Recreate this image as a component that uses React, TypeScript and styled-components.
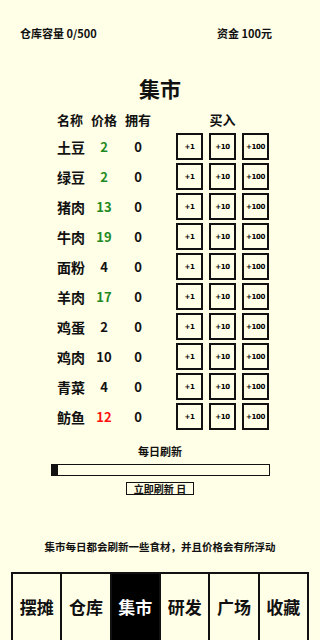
import styled, { createGlobalStyle } from "styled-components";

const GlobalStyle = createGlobalStyle`
    html, body {
        margin: 0;
        padding: 0;
        background: #fffee6;
    }
    body {
        font-family: "Noto Sans CJK SC", "Noto Sans", sans-serif;
        color: #111;
    }
`;

const Page = styled.div`
    width: 320px;
    height: 640px;
    overflow: hidden;
    display: flex;
    flex-direction: column;
    background: #fffee6;
`;

const TopBar = styled.div`
    display: flex;
    justify-content: space-between;
    padding: 26px 48px 0 20px;
    font-size: 11px;
    font-weight: 700;
    line-height: 14px;
`;

const Title = styled.h1`
    margin: 36px 0 0;
    text-align: center;
    font-size: 21px;
    line-height: 24px;
    font-weight: 700;
`;

const Table = styled.div`
    margin: 9px 0 0 57px;
    display: flex;
    flex-direction: column;
    gap: 3px;
`;

const Row = styled.div<{ $head?: boolean }>`
    display: flex;
    align-items: center;
    height: ${(p) => (p.$head ? "20px" : "27px")};
    margin-bottom: ${(p) => (p.$head ? "1px" : "0")};
    font-weight: 700;
    font-size: ${(p) => (p.$head ? "13px" : "14px")};
`;

const Name = styled.div`
    width: 30px;
    white-space: nowrap;
`;

const Cell = styled.div<{ $color?: string }>`
    width: 34px;
    text-align: center;
    color: ${(p) => p.$color || "#111"};
    font-size: 13px;
    white-space: nowrap;
`;

const BuyHead = styled.div`
    margin-left: 21px;
    width: 93px;
    text-align: center;
    font-size: 13px;
`;

const Buttons = styled.div`
    margin-left: 21px;
    display: flex;
    gap: 6px;
`;

const BuyButton = styled.button`
    width: 27px;
    height: 27px;
    padding: 0;
    border: 2px solid #111;
    background: #fffee6;
    font-family: "DejaVu Sans", sans-serif;
    font-size: 7px;
    font-weight: 700;
    color: #000;
    letter-spacing: -0.4px;
    -webkit-font-smoothing: antialiased;
`;

const Refresh = styled.div`
    margin-top: 14px;
    display: flex;
    flex-direction: column;
    align-items: center;
`;

const RefreshLabel = styled.div`
    font-size: 11px;
    font-weight: 700;
    line-height: 14px;
`;

const Bar = styled.div`
    margin-top: 6px;
    width: 219px;
    height: 12px;
    box-sizing: border-box;
    border: 1.5px solid #111;
    background: #fffee6;
`;

const Fill = styled.div`
    height: 100%;
    background: #111;
`;

const RefreshButton = styled.button`
    margin-top: 6px;
    width: 68px;
    height: 13px;
    padding: 0;
    box-sizing: border-box;
    border: 1.5px solid #111;
    background: #fffee6;
    font-family: inherit;
    font-size: 10px;
    font-weight: 700;
    line-height: 9px;
    color: #111;
`;

const Tip = styled.p`
    margin: 45px 0 0;
    text-align: center;
    font-size: 10.5px;
    font-weight: 700;
    line-height: 14px;
`;

const Nav = styled.nav`
    margin: 18px 11px 0;
    display: flex;
    height: 68px;
    flex-shrink: 0;
    border: 2px solid #111;
`;

const Tab = styled.div<{ $active?: boolean }>`
    flex: 1;
    display: flex;
    align-items: center;
    justify-content: center;
    padding-bottom: 4px;
    font-size: 17px;
    font-weight: 700;
    background: ${(p) => (p.$active ? "#000" : "#fffee6")};
    color: ${(p) => (p.$active ? "#fff" : "#111")};
    & + & {
        border-left: 2px solid #111;
    }
`;

type Item = { name: string; price: number; own: number; color: string };

const GREEN = "#1f8a1f";
const RED = "#ff1010";
const BLACK = "#111";

const items: Item[] = [
    { name: "土豆", price: 2, own: 0, color: GREEN },
    { name: "绿豆", price: 2, own: 0, color: GREEN },
    { name: "猪肉", price: 13, own: 0, color: GREEN },
    { name: "牛肉", price: 19, own: 0, color: GREEN },
    { name: "面粉", price: 4, own: 0, color: BLACK },
    { name: "羊肉", price: 17, own: 0, color: GREEN },
    { name: "鸡蛋", price: 2, own: 0, color: BLACK },
    { name: "鸡肉", price: 10, own: 0, color: BLACK },
    { name: "青菜", price: 4, own: 0, color: BLACK },
    { name: "鲂鱼", price: 12, own: 0, color: RED },
];

const tabs = ["摆摊", "仓库", "集市", "研发", "广场", "收藏"];

const App = () => {
    const progress = 3;

    return (
        <Page>
            <GlobalStyle />
            <TopBar>
                <span>仓库容量 0/500</span>
                <span>资金 100元</span>
            </TopBar>
            <Title>集市</Title>
            <Table>
                <Row $head>
                    <Name>名称</Name>
                    <Cell>价格</Cell>
                    <Cell>拥有</Cell>
                    <BuyHead>买入</BuyHead>
                </Row>
                {items.map((item) => (
                    <Row key={item.name}>
                        <Name>{item.name}</Name>
                        <Cell $color={item.color}>{item.price}</Cell>
                        <Cell>{item.own}</Cell>
                        <Buttons>
                            <BuyButton>+1</BuyButton>
                            <BuyButton>+10</BuyButton>
                            <BuyButton>+100</BuyButton>
                        </Buttons>
                    </Row>
                ))}
            </Table>
            <Refresh>
                <RefreshLabel>每日刷新</RefreshLabel>
                <Bar>
                    <Fill style={{ width: `${progress}%` }} />
                </Bar>
                <RefreshButton>立即刷新 日</RefreshButton>
            </Refresh>
            <Tip>集市每日都会刷新一些食材，并且价格会有所浮动</Tip>
            <Nav>
                {tabs.map((t) => (
                    <Tab key={t} $active={t === "集市"}>{t}</Tab>
                ))}
            </Nav>
        </Page>
    );
};

export default App;
